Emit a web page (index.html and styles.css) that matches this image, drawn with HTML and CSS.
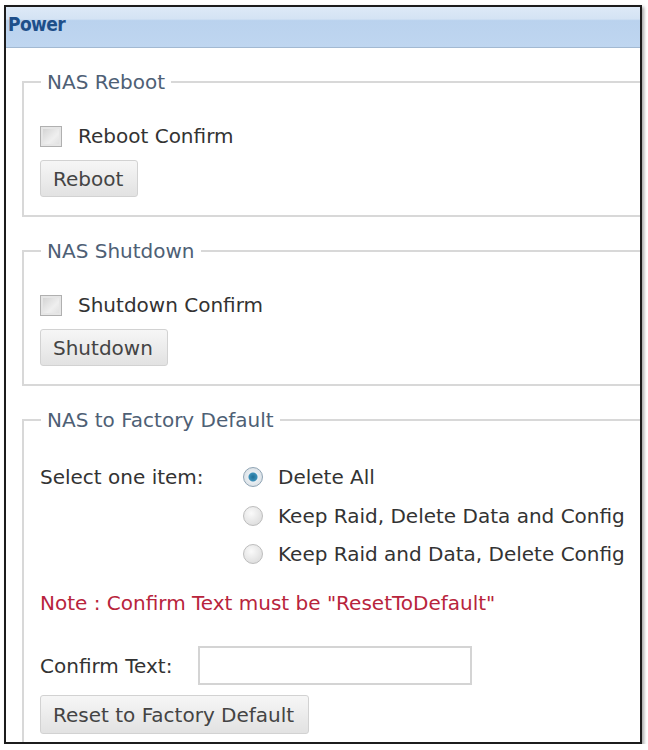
FILE: index.html
```html
<!DOCTYPE html>
<html lang="en">
<head>
    <meta charset="UTF-8">
    <meta name="viewport" content="width=device-width, initial-scale=1.0">
    <title>Power</title>
    <link rel="stylesheet" href="styles.css">
</head>
<body>

<div class="window">
    <div class="title">Power</div>

    <div class="content">
        <fieldset class="group">
            <legend>NAS Reboot</legend>
            <label class="check"><input type="checkbox"> Reboot Confirm</label>
            <button class="btn">Reboot</button>
        </fieldset>

        <fieldset class="group">
            <legend>NAS Shutdown</legend>
            <label class="check"><input type="checkbox"> Shutdown Confirm</label>
            <button class="btn">Shutdown</button>
        </fieldset>

        <fieldset class="group">
            <legend>NAS to Factory Default</legend>
            <div class="choice">
                <span class="choice-label">Select one item:</span>
                <div class="options">
                    <label class="radio"><input type="radio" name="reset" checked> Delete All</label>
                    <label class="radio"><input type="radio" name="reset"> Keep Raid, Delete Data and Config</label>
                    <label class="radio"><input type="radio" name="reset"> Keep Raid and Data, Delete Config</label>
                </div>
            </div>
            <p class="note">Note : Confirm Text must be "ResetToDefault"</p>
            <div class="confirm">
                <label for="confirm-text">Confirm Text:</label>
                <input type="text" id="confirm-text">
            </div>
            <button class="btn">Reset to Factory Default</button>
        </fieldset>
    </div>
</div>

</body>
</html>
```

FILE: styles.css
```css
body {
    margin: 0;
    padding: 0;
    background: #fff;
    font-family: "DejaVu Sans", sans-serif;
    font-size: 20px;
    color: #333;
}
.window {
    box-sizing: border-box;
    width: 638px;
    height: 739px;
    margin: 5px 0 0 4px;
    border: 2px solid #1c1c1c;
    box-shadow: 2px 2px 3px rgba(0, 0, 0, 0.35);
    overflow: hidden;
}
.title {
    height: 40px;
    line-height: 34px;
    padding-left: 2px;
    border-bottom: 1px solid #a2b9d2;
    background: linear-gradient(#dde9f7 0%, #d4e3f4 30%, #bad2ee 34%, #bfd6f0 100%);
    color: #1e4f8a;
    font-family: "DejaVu Sans Condensed", "DejaVu Sans", sans-serif;
    font-weight: bold;
    font-size: 19px;
    letter-spacing: -0.6px;
}
.content {
    padding-left: 16px;
}
.group {
    margin: 23px -20px 0 0;
    padding: 0 0 18px 16px;
    border: 2px solid #d8d8d8;
    border-right: none;
}
.group legend {
    padding: 0 6px;
    margin-left: 1px;
    font-size: 20px;
    line-height: 22px;
    color: #4e6075;
}
.check {
    display: flex;
    align-items: center;
    height: 24px;
    margin-top: 31px;
}
.check input,
.radio input {
    appearance: none;
    margin: 0;
    flex: none;
}
.check input {
    width: 22px;
    height: 21px;
    margin-right: 16px;
    border: 1px solid #b0b0b0;
    background: linear-gradient(135deg, #cfcfcf, #efefef 60%, #dcdcdc);
    box-shadow: inset 0 0 0 2px #e6e6e6;
}
.btn {
    display: block;
    margin-top: 12px;
    height: 37px;
    padding: 0 14px 0 12px;
    border: 1px solid #d2d2d2;
    border-radius: 3px;
    background: linear-gradient(#f6f6f6, #e2e2e2);
    font-family: inherit;
    font-size: 20px;
    color: #444;
}
.choice {
    display: flex;
    margin-top: 31px;
}
.choice-label {
    width: 203px;
    line-height: 30px;
}
.options {
    display: flex;
    flex-direction: column;
    gap: 8.5px;
}
.radio {
    display: flex;
    align-items: center;
    height: 30px;
}
.radio input {
    width: 20px;
    height: 20px;
    margin-right: 15px;
    border-radius: 50%;
    border: 1px solid #bdbdbd;
    background: radial-gradient(circle at 40% 35%, #fafafa, #d6d6d6);
}
.radio input:checked {
    border-color: #8fa4b4;
    background: radial-gradient(circle, #1f6f96 0, #3b8fb8 4px, #e9eef2 5px, #d0d7dd 100%);
}
.note {
    margin: 22px 0 0;
    line-height: 24px;
    color: #b8243c;
}
.confirm {
    display: flex;
    align-items: center;
    margin-top: 31px;
}
.confirm label {
    width: 158px;
}
.confirm input {
    box-sizing: border-box;
    width: 274px;
    height: 39px;
    border: 2px solid #d4d4d4;
    background: #fff;
}
.confirm + .btn {
    margin-top: 10px;
    height: 39px;
}
```
